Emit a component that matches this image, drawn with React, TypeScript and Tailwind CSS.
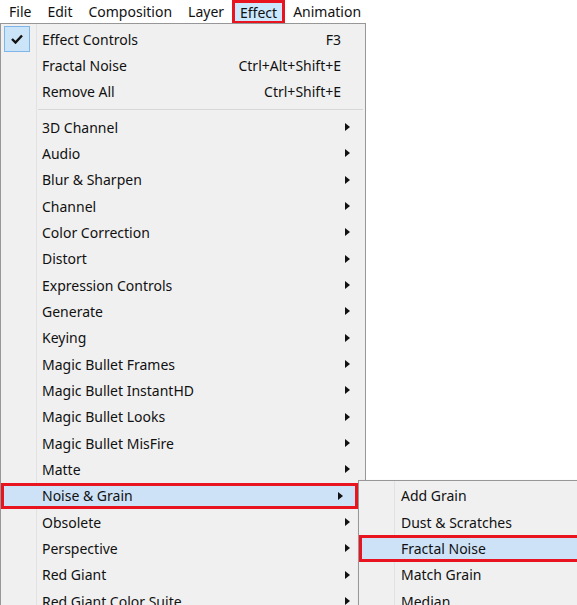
import React from 'react';

type Item = { label: string; shortcut?: string; checked?: boolean };

const topItems: Item[] = [
  { label: 'Effect Controls', shortcut: 'F3', checked: true },
  { label: 'Fractal Noise', shortcut: 'Ctrl+Alt+Shift+E' },
  { label: 'Remove All', shortcut: 'Ctrl+Shift+E' },
];

const categories = [
  '3D Channel',
  'Audio',
  'Blur & Sharpen',
  'Channel',
  'Color Correction',
  'Distort',
  'Expression Controls',
  'Generate',
  'Keying',
  'Magic Bullet Frames',
  'Magic Bullet InstantHD',
  'Magic Bullet Looks',
  'Magic Bullet MisFire',
  'Matte',
  'Noise & Grain',
  'Obsolete',
  'Perspective',
  'Red Giant',
  'Red Giant Color Suite',
];

const noiseItems = ['Add Grain', 'Dust & Scratches', 'Fractal Noise', 'Match Grain', 'Median'];

const menuBar = ['File', 'Edit', 'Composition', 'Layer', 'Effect', 'Animation'];

const Arrow = () => (
  <svg width="5" height="8" viewBox="0 0 5 8" className="shrink-0">
    <path d="M0 0 L5 4 L0 8 Z" fill="#111" />
  </svg>
);

const Check = () => (
  <svg width="12" height="10" viewBox="0 0 12 10">
    <path d="M1 5 L4.5 8.5 L11 1.5" stroke="#111" strokeWidth="2.4" fill="none" />
  </svg>
);

// 하위 메뉴 (Noise & Grain)
const SubMenu = () => (
  <div className="absolute left-[357px] top-[-3px] w-[240px] bg-[#f0f0f0] border-l border-t border-[#979797] pt-[2px] shadow-[2px_2px_3px_rgba(0,0,0,0.25)]">
    <div className="absolute left-[35px] top-0 bottom-0 w-px bg-[#e2e2e2]" />
    {noiseItems.map(label => {
      const hot = label === 'Fractal Noise';
      return (
        <div
          key={label}
          className={`relative flex items-center h-[26.33px] pl-[42px] ${hot ? 'bg-[#cde2f6] outline-[3px] outline-[#e8141f] -outline-offset-[3px]' : ''}`}
        >
          {label}
        </div>
      );
    })}
  </div>
);

const App: React.FC = () => {
  return (
    <div
      className="w-[577px] h-[605px] overflow-hidden bg-white text-[14px] text-[#111]"
      style={{ fontFamily: '"Noto Sans", "Liberation Sans", sans-serif' }}
    >
      {/* 메뉴 바 */}
      <div className="flex h-[23px] items-center bg-white pl-[1px]">
        {menuBar.map(m => (
          <div
            key={m}
            className={`flex items-center h-[24px] px-[8px] ${m === 'Effect' ? 'bg-[#cce8ff] outline-[3px] outline-[#e8141f] -outline-offset-[3px] mt-[1px]' : ''}`}
          >
            {m}
          </div>
        ))}
      </div>

      {/* 드롭다운 */}
      <div className="relative w-[366px] bg-[#f0f0f0] border border-[#979797] pt-[2px]">
        <div className="absolute left-[35px] top-0 bottom-0 w-px bg-[#e2e2e2]" />
        {topItems.map(it => (
          <div key={it.label} className="relative flex items-center h-[26.33px]">
            <div className="w-[41px] shrink-0 flex items-center justify-start pl-[3px]">
              {it.checked && (
                <div className="w-[26px] h-[26px] bg-[#cce4f7] border border-[#7fb6ea] flex items-center justify-center">
                  <Check />
                </div>
              )}
            </div>
            <span className="flex-1">{it.label}</span>
            <span className="pr-[24px]">{it.shortcut}</span>
          </div>
        ))}
        <div className="flex items-center h-[9px] pl-[37px] pr-[2px]">
          <div className="h-px w-full bg-[#d7d7d7]" />
        </div>
        {categories.map(c => {
          const hot = c === 'Noise & Grain';
          return (
            <div
              key={c}
              className={`relative flex items-center h-[26.33px] pl-[41px] pr-[15px] ${hot ? 'bg-[#cde2f6] outline-[3px] outline-[#e8141f] -outline-offset-[3px] mr-[7px]' : ''}`}
            >
              <span className="flex-1">{c}</span>
              <Arrow />
              {hot && <SubMenu />}
            </div>
          );
        })}
      </div>
    </div>
  );
};

export default App;
